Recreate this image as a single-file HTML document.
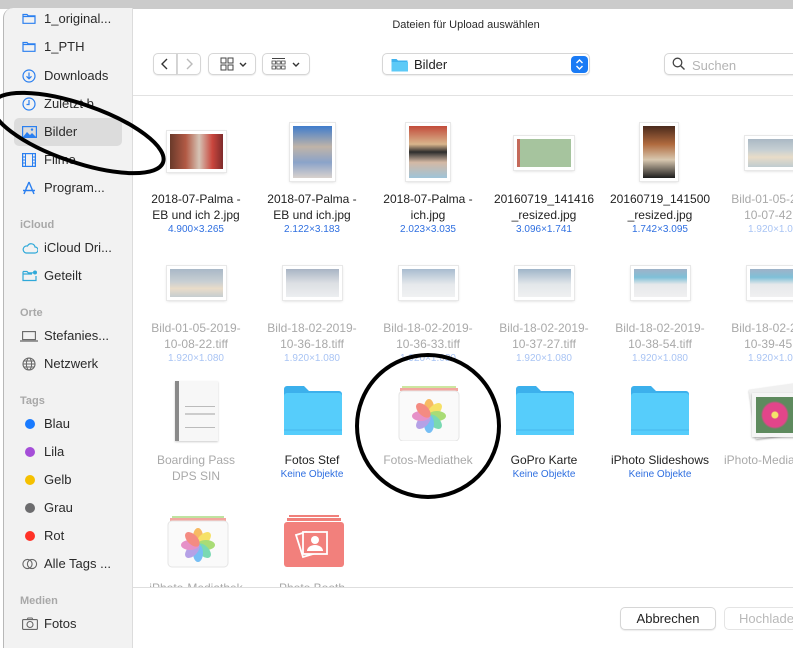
<!DOCTYPE html>
<html><head><meta charset="utf-8">
<style>
*{margin:0;padding:0;box-sizing:border-box}
body{width:793px;height:639px;overflow:hidden;background:#fff;font-family:"Liberation Sans",sans-serif;position:relative;-webkit-font-smoothing:antialiased}
.a{position:absolute}
.top{left:0;top:0;width:793px;height:9px;background:#cbcbcb}
.sb{left:3px;top:8px;width:130px;height:640px;background:#f2f2f2;border-left:1px solid #b8b8b8;border-right:1px solid #dcdcdc;border-top-left-radius:10px}
.si{position:absolute;left:44px;font-size:13px;color:#2a2a2a;white-space:nowrap}
.sh{position:absolute;left:20px;font-size:11px;color:#a8a8a8;font-weight:bold}
.ic{position:absolute;left:22px}
.dot{position:absolute;left:25px;width:10px;height:10px;border-radius:50%}
.btn{position:absolute;height:22px;background:#fff;border:1px solid #d6d6d6;border-radius:5px;box-shadow:0 1px 1px rgba(0,0,0,.08)}
.nm{position:absolute;width:116px;text-align:center;font-size:12px;line-height:16px;color:#222}
.g{color:#a9a9a9}
.d{font-size:10px;color:#2f6fe0;line-height:13px}
.dg{font-size:10px;color:#a9c4f4;line-height:13px}
.th{position:absolute;background:#fff;box-shadow:0 0 0 1px #e8e8e8,0 1px 3px rgba(0,0,0,.18);padding:3px}
.th div{width:100%;height:100%}
.fold{position:absolute;width:60px;height:50px}
</style></head><body>
<div class="a top"></div>
<div class="a sb">
</div>
<!-- sidebar contents -->
<svg class="ic" style="top:12px" width="14" height="12"><path d="M1 2.5h4l1.2 1.3H13v7.5H1z M1 4.5h12" fill="none" stroke="#2a7ff0" stroke-width="1.2"/></svg>
<div class="si" style="top:11px">1_original...</div>
<svg class="ic" style="top:40px" width="14" height="12"><path d="M1 2.5h4l1.2 1.3H13v7.5H1z M1 4.5h12" fill="none" stroke="#2a7ff0" stroke-width="1.2"/></svg>
<div class="si" style="top:39px">1_PTH</div>
<svg class="ic" style="top:69px" width="14" height="14"><circle cx="7" cy="7" r="6" fill="none" stroke="#2a7ff0" stroke-width="1.2"/><path d="M7 3.5v6M4.5 7.3 7 9.8l2.5-2.5" fill="none" stroke="#2a7ff0" stroke-width="1.2"/></svg>
<div class="si" style="top:68px">Downloads</div>
<svg class="ic" style="top:97px" width="14" height="14"><circle cx="7" cy="7" r="6" fill="none" stroke="#2a7ff0" stroke-width="1.2"/><path d="M7 3v4.5H4.5" fill="none" stroke="#2a7ff0" stroke-width="1.2"/></svg>
<div class="si" style="top:96px">Zuletzt b</div>
<div class="a" style="left:14px;top:118px;width:108px;height:28px;background:#dcdcdc;border-radius:5px"></div>
<svg class="ic" style="top:126px" width="15" height="12"><rect x="0.6" y="0.6" width="13.8" height="10.8" fill="none" stroke="#2a7ff0" stroke-width="1.2"/><path d="M1 11 5 6l3 3 2-2 4 4z" fill="#2a7ff0"/><circle cx="10" cy="3.6" r="1.2" fill="#2a7ff0"/></svg>
<div class="si" style="top:124px">Bilder</div>
<svg class="ic" style="top:153px" width="14" height="14"><rect x="0.6" y="0.6" width="12.8" height="12.8" fill="none" stroke="#2a7ff0" stroke-width="1.2"/><path d="M3.5 1v12M10.5 1v12M1 4h2.5M1 7h2.5M1 10h2.5M10.5 4H13M10.5 7H13M10.5 10H13" stroke="#2a7ff0" stroke-width="1"/></svg>
<div class="si" style="top:152px">Filme</div>
<svg class="ic" style="top:181px" width="14" height="14"><path d="M7 1 2 13M7 1l5 12M1 9.5h12M5 5.5l-1 2" fill="none" stroke="#2a7ff0" stroke-width="1.4"/></svg>
<div class="si" style="top:180px">Program...</div>
<div class="sh" style="top:219px">iCloud</div>
<svg class="ic" style="top:242px" width="16" height="12"><path d="M4 11h9a3 3 0 0 0 0-6 4 4 0 0 0-7.5-1A3.5 3.5 0 0 0 4 11z" fill="none" stroke="#2fa9d9" stroke-width="1.2"/></svg>
<div class="si" style="top:240px">iCloud Dri...</div>
<svg class="ic" style="top:269px" width="16" height="13"><path d="M1 2.5h4l1.2 1.3H11M1 2.5v9h13V7M1 5h9" fill="none" stroke="#2fa9d9" stroke-width="1.2"/><circle cx="13" cy="3.5" r="2" fill="#2fa9d9"/></svg>
<div class="si" style="top:268px">Geteilt</div>
<div class="sh" style="top:307px">Orte</div>
<svg class="ic" style="top:331px;left:20px" width="18" height="11"><rect x="2.6" y="0.6" width="12.8" height="8" fill="none" stroke="#666" stroke-width="1.1"/><path d="M0 10h18" stroke="#666" stroke-width="1.2"/></svg>
<div class="si" style="top:328px">Stefanies...</div>
<svg class="ic" style="top:357px" width="14" height="14"><circle cx="7" cy="7" r="6" fill="none" stroke="#666" stroke-width="1.1"/><ellipse cx="7" cy="7" rx="2.6" ry="6" fill="none" stroke="#666" stroke-width="1"/><path d="M1 7h12M2 4h10M2 10h10" stroke="#666" stroke-width="0.9"/></svg>
<div class="si" style="top:356px">Netzwerk</div>
<div class="sh" style="top:395px">Tags</div>
<div class="dot" style="top:419px;background:#1a7bff"></div><div class="si" style="top:416px">Blau</div>
<div class="dot" style="top:447px;background:#a54ed8"></div><div class="si" style="top:444px">Lila</div>
<div class="dot" style="top:475px;background:#f5c000"></div><div class="si" style="top:472px">Gelb</div>
<div class="dot" style="top:503px;background:#6c6c6e"></div><div class="si" style="top:500px">Grau</div>
<div class="dot" style="top:531px;background:#ff3227"></div><div class="si" style="top:528px">Rot</div>
<svg class="ic" style="top:558px" width="16" height="12"><circle cx="5.5" cy="6" r="4.6" fill="none" stroke="#666" stroke-width="1.1"/><circle cx="10" cy="6" r="4.6" fill="none" stroke="#666" stroke-width="1.1"/></svg>
<div class="si" style="top:556px">Alle Tags ...</div>
<div class="sh" style="top:595px">Medien</div>
<svg class="ic" style="top:617px" width="16" height="13"><rect x="0.6" y="2.6" width="14.8" height="9.8" rx="1" fill="none" stroke="#666" stroke-width="1.1"/><circle cx="8" cy="7.5" r="3" fill="none" stroke="#666" stroke-width="1.1"/><path d="M5 2.6 6 1h4l1 1.6" fill="none" stroke="#666"/></svg>
<div class="si" style="top:616px">Fotos</div>

<!-- header -->
<div class="a" style="left:133px;top:19px;width:660px;text-align:center;font-size:11px;color:#2a2a2a;padding-left:6px">Dateien für Upload auswählen</div>
<div class="btn" style="left:153px;top:53px;width:24px;border-radius:5px 0 0 5px"><svg width="22" height="20"><path d="M13 5l-5 5 5 5" fill="none" stroke="#333" stroke-width="1.4"/></svg></div>
<div class="btn" style="left:177px;top:53px;width:24px;border-radius:0 5px 5px 0"><svg width="22" height="20"><path d="M9 5l5 5-5 5" fill="none" stroke="#bbb" stroke-width="1.4"/></svg></div>
<div class="btn" style="left:208px;top:53px;width:48px"><svg width="46" height="20"><rect x="12" y="4" width="5" height="5" fill="none" stroke="#444"/><rect x="19" y="4" width="5" height="5" fill="none" stroke="#444"/><rect x="12" y="11" width="5" height="5" fill="none" stroke="#444"/><rect x="19" y="11" width="5" height="5" fill="none" stroke="#444"/><path d="M31 9l3 3 3-3" fill="none" stroke="#333" stroke-width="1.4"/></svg></div>
<div class="btn" style="left:262px;top:53px;width:48px"><svg width="46" height="20"><path d="M9 4.5h13" stroke="#444"/><g fill="none" stroke="#444" stroke-width=".8"><rect x="9" y="7" width="3.5" height="3"/><rect x="13.8" y="7" width="3.5" height="3"/><rect x="18.6" y="7" width="3.5" height="3"/><rect x="9" y="12" width="3.5" height="3"/><rect x="13.8" y="12" width="3.5" height="3"/><rect x="18.6" y="12" width="3.5" height="3"/></g><path d="M30 9l3 3 3-3" fill="none" stroke="#333" stroke-width="1.4"/></svg></div>
<div class="btn" style="left:382px;top:53px;width:208px">
 <svg class="a" style="left:8px;top:3px" width="17" height="15"><path d="M0.5 2h5l1.5 1.5h9.5v11H0.5z" fill="#3fb3ee"/><path d="M0.5 5h16.5v9.5H0.5z" fill="#5ccaf7"/></svg>
 <div class="a" style="left:31px;top:3px;font-size:13px;color:#222">Bilder</div>
 <div class="a" style="left:188px;top:2px;width:17px;height:17px;background:#1a7bf5;border-radius:4px"><svg width="17" height="17"><path d="M5.5 7 8.5 4l3 3M5.5 10l3 3 3-3" fill="none" stroke="#fff" stroke-width="1.4"/></svg></div>
</div>
<div class="btn" style="left:664px;top:53px;width:140px">
 <svg class="a" style="left:7px;top:3px" width="14" height="14"><circle cx="5.5" cy="5.5" r="4.3" fill="none" stroke="#444" stroke-width="1.3"/><path d="M8.7 8.7 12.5 12.5" stroke="#444" stroke-width="1.4"/></svg>
 <div class="a" style="left:27px;top:4px;font-size:13px;color:#b4b4b4">Suchen</div>
</div>
<div class="a" style="left:133px;top:95px;width:660px;height:1px;background:#e2e2e2"></div>

<!-- row1 thumbs -->
<div class="th" style="left:167px;top:131px;width:59px;height:41px"><div style="background:linear-gradient(90deg,#6a3a2a,#b25a45 30%,#d5c3b5 55%,#c9463d 80%,#7e2b2b)"></div></div>
<div class="th" style="left:290px;top:123px;width:45px;height:58px"><div style="background:linear-gradient(180deg,#3f7ccc,#c0b4a8 40%,#8aa3c9 70%,#d8d2cd)"></div></div>
<div class="th" style="left:406px;top:123px;width:44px;height:58px"><div style="background:linear-gradient(180deg,#c24b3a,#d8b58c 35%,#2d2d2d 50%,#d4b9a5 70%,#9ec3d8)"></div></div>
<div class="th" style="left:514px;top:136px;width:60px;height:34px"><div style="background:#a6c49e;box-shadow:inset 3px 0 0 #c46a5a"></div></div>
<div class="th" style="left:640px;top:123px;width:38px;height:58px"><div style="background:linear-gradient(180deg,#4a2a1c,#b06a3e 35%,#d8c8b0 65%,#1d1d1d)"></div></div>
<div class="th" style="left:745px;top:136px;width:60px;height:34px"><div style="background:linear-gradient(180deg,#aab8c4,#c7d0d3 40%,#e8dcc8 65%,#c0ccd0)"></div></div>

<div class="nm" style="left:138px;top:191px">2018-07-Palma -<br>EB und ich 2.jpg<div class="d">4.900×3.265</div></div>
<div class="nm" style="left:254px;top:191px">2018-07-Palma -<br>EB und ich.jpg<div class="d">2.122×3.183</div></div>
<div class="nm" style="left:370px;top:191px">2018-07-Palma -<br>ich.jpg<div class="d">2.023×3.035</div></div>
<div class="nm" style="left:486px;top:191px">20160719_141416<br>_resized.jpg<div class="d">3.096×1.741</div></div>
<div class="nm" style="left:602px;top:191px">20160719_141500<br>_resized.jpg<div class="d">1.742×3.095</div></div>
<div class="nm g" style="left:718px;top:191px">Bild-01-05-2019-<br>10-07-42.tiff<div class="dg">1.920×1.080</div></div>

<!-- row2 -->
<div class="th" style="left:167px;top:266px;width:59px;height:34px"><div style="background:linear-gradient(180deg,#a9b8c7,#c8cfd3 45%,#e9dcc9 70%,#c6cdd0)"></div></div>
<div class="th" style="left:283px;top:266px;width:59px;height:34px"><div style="background:linear-gradient(180deg,#a8b4c4,#dcdfe3 50%,#eceef0)"></div></div>
<div class="th" style="left:399px;top:266px;width:59px;height:34px"><div style="background:linear-gradient(180deg,#a8bccf,#e6e9ec 55%,#f0f1f2)"></div></div>
<div class="th" style="left:515px;top:266px;width:59px;height:34px"><div style="background:linear-gradient(180deg,#9fb5c9,#e3e7ea 55%,#eff0f1)"></div></div>
<div class="th" style="left:631px;top:266px;width:59px;height:34px"><div style="background:linear-gradient(180deg,#9fb2c8,#7fc0d8 30%,#e6e8ea 55%,#f0f0f1)"></div></div>
<div class="th" style="left:747px;top:266px;width:59px;height:34px"><div style="background:linear-gradient(180deg,#9fb2c8,#7fc0d8 30%,#e6e8ea 55%,#f0f0f1)"></div></div>

<div class="nm g" style="left:138px;top:320px">Bild-01-05-2019-<br>10-08-22.tiff<div class="dg">1.920×1.080</div></div>
<div class="nm g" style="left:254px;top:320px">Bild-18-02-2019-<br>10-36-18.tiff<div class="dg">1.920×1.080</div></div>
<div class="nm g" style="left:370px;top:320px">Bild-18-02-2019-<br>10-36-33.tiff<div class="dg">1.920×1.080</div></div>
<div class="nm g" style="left:486px;top:320px">Bild-18-02-2019-<br>10-37-27.tiff<div class="dg">1.920×1.080</div></div>
<div class="nm g" style="left:602px;top:320px">Bild-18-02-2019-<br>10-38-54.tiff<div class="dg">1.920×1.080</div></div>
<div class="nm g" style="left:718px;top:320px">Bild-18-02-2019-<br>10-39-45.tiff<div class="dg">1.920×1.080</div></div>

<!-- row3 -->
<div class="a" style="left:175px;top:381px;width:43px;height:60px;background:#f7f7f7;box-shadow:0 1px 2px rgba(0,0,0,.2);border-left:4px solid #8a8a8a">
 <div class="a" style="left:6px;top:25px;width:30px;height:1px;background:#bbb"></div><div class="a" style="left:6px;top:32px;width:30px;height:2px;background:#ccc"></div><div class="a" style="left:6px;top:46px;width:30px;height:1px;background:#bbb"></div>
</div>
<svg class="fold" style="left:283px;top:385px" width="60" height="56"><path d="M1 4a3 3 0 0 1 3-3h17l5 5h30a3 3 0 0 1 3 3v42a3 3 0 0 1-3 3H4a3 3 0 0 1-3-3z" fill="#3cb0ec"/><path d="M1 11a3 3 0 0 1 3-3h52a3 3 0 0 1 3 3v40a3 3 0 0 1-3 3H4a3 3 0 0 1-3-3z" fill="#56cdfb"/><path d="M1 45h58" stroke="#46b8ee" stroke-width="1"/></svg>
<svg class="fold" style="left:515px;top:385px" width="60" height="56"><path d="M1 4a3 3 0 0 1 3-3h17l5 5h30a3 3 0 0 1 3 3v42a3 3 0 0 1-3 3H4a3 3 0 0 1-3-3z" fill="#3cb0ec"/><path d="M1 11a3 3 0 0 1 3-3h52a3 3 0 0 1 3 3v40a3 3 0 0 1-3 3H4a3 3 0 0 1-3-3z" fill="#56cdfb"/><path d="M1 45h58" stroke="#46b8ee" stroke-width="1"/></svg>
<svg class="fold" style="left:630px;top:385px" width="60" height="56"><path d="M1 4a3 3 0 0 1 3-3h17l5 5h30a3 3 0 0 1 3 3v42a3 3 0 0 1-3 3H4a3 3 0 0 1-3-3z" fill="#3cb0ec"/><path d="M1 11a3 3 0 0 1 3-3h52a3 3 0 0 1 3 3v40a3 3 0 0 1-3 3H4a3 3 0 0 1-3-3z" fill="#56cdfb"/><path d="M1 45h58" stroke="#46b8ee" stroke-width="1"/></svg>

<svg class="a" style="left:398px;top:385px" width="62" height="56" id="fl1"><rect x="4" y="1" width="54" height="3" fill="#cde6a0"/><rect x="2" y="3" width="58" height="3" fill="#f2a7a0"/><rect x="1" y="6" width="60" height="50" rx="4" fill="#fafafa" stroke="#e5e5e5"/>
<g transform="translate(31 31)" opacity=".75"><ellipse rx="5" ry="9" cy="-8" fill="#f7a531"/><ellipse rx="5" ry="9" cy="-8" fill="#f5d936" transform="rotate(45)"/><ellipse rx="5" ry="9" cy="-8" fill="#8ed24a" transform="rotate(90)"/><ellipse rx="5" ry="9" cy="-8" fill="#4fcf9a" transform="rotate(135)"/><ellipse rx="5" ry="9" cy="-8" fill="#4aaaf2" transform="rotate(180)"/><ellipse rx="5" ry="9" cy="-8" fill="#9f84e0" transform="rotate(225)"/><ellipse rx="5" ry="9" cy="-8" fill="#e06fb8" transform="rotate(270)"/><ellipse rx="5" ry="9" cy="-8" fill="#f2665a" transform="rotate(315)"/></g></svg>

<div class="a" style="left:752px;top:386px;width:50px;height:50px;background:#f0f0f0;transform:rotate(-8deg);box-shadow:0 1px 2px rgba(0,0,0,.3)"></div>
<div class="a" style="left:752px;top:393px;width:50px;height:44px;background:#f5f5f5;box-shadow:0 1px 2px rgba(0,0,0,.3);padding:4px"><div style="width:100%;height:100%;background:radial-gradient(circle at 45% 50%,#f5e36a 0 3px,#e2458a 4px 12px,#5e8a5e 14px)"></div></div>

<div class="nm g" style="left:138px;top:452px">Boarding Pass<br>DPS SIN</div>
<div class="nm" style="left:254px;top:452px">Fotos Stef<div class="d">Keine Objekte</div></div>
<div class="nm g" style="left:370px;top:452px">Fotos-Mediathek</div>
<div class="nm" style="left:486px;top:452px">GoPro Karte<div class="d">Keine Objekte</div></div>
<div class="nm" style="left:602px;top:452px">iPhoto Slideshows<div class="d">Keine Objekte</div></div>
<div class="nm g" style="left:718px;top:452px;text-align:left;padding-left:6px">iPhoto-Mediathek</div>

<!-- row4 -->
<svg class="a" style="left:167px;top:516px" width="62" height="52"><rect x="5" y="0" width="52" height="2" fill="#bfe3a0"/><rect x="3" y="2" width="56" height="3" fill="#f2a7a0"/><rect x="1" y="5" width="60" height="46" rx="4" fill="#fafafa" stroke="#e5e5e5"/>
<g transform="translate(31 29)" opacity=".75"><ellipse rx="5" ry="9" cy="-8" fill="#f7a531"/><ellipse rx="5" ry="9" cy="-8" fill="#f5d936" transform="rotate(45)"/><ellipse rx="5" ry="9" cy="-8" fill="#8ed24a" transform="rotate(90)"/><ellipse rx="5" ry="9" cy="-8" fill="#4fcf9a" transform="rotate(135)"/><ellipse rx="5" ry="9" cy="-8" fill="#4aaaf2" transform="rotate(180)"/><ellipse rx="5" ry="9" cy="-8" fill="#9f84e0" transform="rotate(225)"/><ellipse rx="5" ry="9" cy="-8" fill="#e06fb8" transform="rotate(270)"/><ellipse rx="5" ry="9" cy="-8" fill="#f2665a" transform="rotate(315)"/></g></svg>
<svg class="a" style="left:283px;top:515px" width="62" height="53"><rect x="6" y="0" width="50" height="2" fill="#f07f7a"/><rect x="4" y="3" width="54" height="3" fill="#f07f7a"/><rect x="1" y="7" width="60" height="45" rx="3" fill="#f2807c"/><path d="M13 20l10-3 7 22-10 3z" fill="none" stroke="#fff" stroke-width="1.8"/><rect x="20" y="17" width="24" height="22" fill="#f2807c" stroke="#fff" stroke-width="1.8"/><circle cx="32" cy="25" r="4" fill="#fff"/><path d="M24 36a8 6 0 0 1 16 0z" fill="#fff"/></svg>
<div class="a" style="left:133px;top:578px;width:660px;height:9px;overflow:hidden"><div class="nm g" style="left:5px;top:2px">iPhoto-Mediathek</div><div class="nm g" style="left:121px;top:2px">Photo Booth</div></div>

<div class="a" style="left:133px;top:587px;width:660px;height:1px;background:#dedede"></div>
<div class="btn" style="left:620px;top:607px;width:96px;height:23px;text-align:center;font-size:13px;line-height:21px;color:#222">Abbrechen</div>
<div class="btn" style="left:724px;top:607px;width:96px;height:23px;font-size:13px;line-height:21px;color:#b9b9b9;padding-left:14px;box-shadow:none;border-color:#e4e4e4">Hochladen</div>

<!-- annotations -->
<svg class="a" style="left:0;top:0" width="793" height="639">
<ellipse cx="78" cy="133" rx="90" ry="29" transform="rotate(19 78 133)" fill="none" stroke="#000" stroke-width="4"/>
<circle cx="428" cy="426" r="71" fill="none" stroke="#000" stroke-width="4"/>
</svg>
</body></html>
